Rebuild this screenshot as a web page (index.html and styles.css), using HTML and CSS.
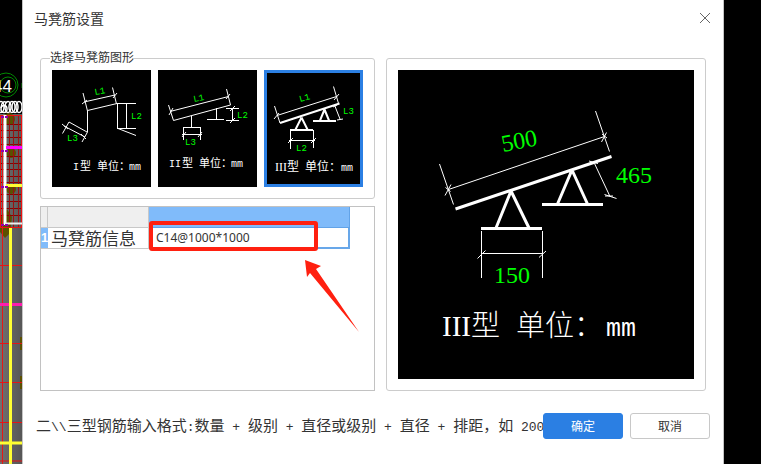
FILE: index.html
```html
<!DOCTYPE html>
<html lang="zh-CN">
<head>
<meta charset="utf-8">
<meta name="viewport" content="width=device-width, initial-scale=1">
<title>马凳筋设置</title>
<link rel="stylesheet" href="styles.css">
</head>
<body>
<div class="workspace">
  <aside class="drawing">
    <svg width="22" height="464" viewBox="0 0 22 464" aria-hidden="true">
      <defs>
        <linearGradient id="slab" x1="0" x2="1" y1="0" y2="0">
          <stop offset="0" stop-color="#707070"/><stop offset="1" stop-color="#565656"/>
        </linearGradient>
      </defs>
      <rect width="22" height="464" fill="#000"/>
      <rect y="114" width="22" height="350" fill="url(#slab)"/>
      <g fill="#5b5000">
        <circle cx="9" cy="119" r="6"/><circle cx="11" cy="153" r="5"/><circle cx="11" cy="189" r="5"/>
        <path d="M7 209l5 8-2 16-5 5-5-6v-14z"/>
        <rect x="20" y="337" width="2" height="13"/><rect x="20" y="376" width="2" height="13"/>
      </g>
      <g fill="none" stroke="#008a00">
        <circle cx="6" cy="85" r="12"/><circle cx="8" cy="85" r="8"/><path d="M22 83v5"/>
      </g>
      <path d="M0 124.500h22M0 130.500h22M0 137.500h22M0 144.500h22M0 156.500h22M0 163.500h22M0 169.500h22M0 176.500h22M0 182.500h22M0 194.500h22M0 201.500h22M0 208.500h22M0 215.500h22" stroke="#8a0000"/>
      <path d="M9.500 115v112M13.500 115v112M18.500 115v112" stroke="#9c1010"/>
      <path d="M0 115.500h22M0 227.500h22M21.500 115v112M0.500 115v112" stroke="#f01010"/>
      <path d="M5 115v110" stroke="#fff" stroke-width="3"/>
      <path d="M2.500 115v349M0 265.500h22M0 343.500h22M0 382.500h22M0 422.500h22M0 461h22" stroke="#e51515"/>
      <path d="M6 147.500h16" stroke="#f0f" stroke-width="3"/>
      <path d="M0 304.500h22" stroke="#ff1cae" stroke-width="3"/>
      <path d="M10.500 228v236M6 185.500h16M0 443h22" stroke="#ffff32" stroke-width="3"/>
      <path d="M5 223.500h17" stroke="#eee" stroke-width="2"/>
      <path d="M1 117h8M1 151h8M1 187h8M1 225h8" stroke="#9000b0" stroke-width="2" stroke-dasharray="3 1"/>
      <g class="grid-label"><text x="-7" y="92">44</text></g>
      <g fill="none" stroke="#fff" stroke-width="1.500">
        <ellipse cx="1" cy="107" rx="3" ry="5.500"/><ellipse cx="4" cy="109" rx="3" ry="3.500"/>
        <path d="M7 103c-3-3-6 0-6 5"/>
        <ellipse cx="8" cy="107" rx="3" ry="5.500"/><ellipse cx="12" cy="107" rx="3" ry="5.500"/>
        <ellipse cx="15" cy="107" rx="3" ry="5.500"/><ellipse cx="19" cy="107" rx="3" ry="5.500"/>
      </g>
    </svg>
  </aside>

  <main class="dialog">
    <header class="titlebar">
      <h1>马凳筋设置</h1>
      <button class="close" type="button" aria-label="关闭">
        <svg width="12" height="12" viewBox="0 0 12 12"><path d="M1 1l10 10M11 1L1 11" stroke="#666" fill="none"/></svg>
      </button>
    </header>

    <div class="content">
      <div class="left">
        <fieldset class="shapes">
          <legend>选择马凳筋图形</legend>
          <button class="shape" type="button">
            <svg viewBox="0 0 99 117">
              <path class="thin" d="M31 23l4.500 18v21L30 72M35.500 40.500L65 33.500M32 32l31-7M60.500 17.500l4 16.500M65 33.500h19M65.500 33v25.500M74.500 33v25.500M65 58.500h19M66 58.500l18 7M17 52l18 10M12 56l21 11M17 52l-6.500 11.500M30 34l5-4M61 28l4-5M10 54l6 5M29 64l5 5"/>
              <g class="dim"><text transform="translate(43 25) rotate(-10)">L1</text><text x="79" y="49">L2</text><text x="15" y="71">L3</text></g>
              <g class="cap"><text class="latin" x="21" y="100">I</text><text x="28" y="100">型</text><text x="45" y="100">单位：</text><text class="latin" x="77" y="100">mm</text></g>
            </svg>
          </button>
          <button class="shape" type="button">
            <svg viewBox="0 0 99 117">
              <path class="thin" d="M10.500 35l5 15.500L72.500 35l-4-16M12 41.500l58.500-15M33.500 46v11.500M25 57.500h18M25.500 57v13M42.500 57v13M24 64.500h20M58.500 38v11.500M49 49.500h17M68 38.500h13M68 50.500h13M74.500 38v12M11 45l4-7M68 29l4-5M24 67l4-5M40 67l4-5M72 41l5-5M72 53l5-5"/>
              <g class="dim"><text transform="translate(36 32) rotate(-12)">L1</text><text x="79" y="48">L2</text><text x="27" y="75">L3</text></g>
              <g class="cap"><text class="latin" x="11" y="97">II</text><text x="24" y="97">型</text><text x="41" y="97">单位：</text><text class="latin" x="73" y="97">mm</text></g>
            </svg>
          </button>
          <button class="shape selected" type="button" aria-pressed="true">
            <svg viewBox="0 0 99 117">
              <path class="thin" d="M10.500 36L16 53M13 45.500l59.500-19M69.500 16.500l5 17M26.500 60v19M49.500 60v18M25 70.500h26M70.500 35l5.500 14M10 49l5-6M70 30l5-6M24 73l5-5M47 73l5-5M69 37l4-2M73 50l6-1"/>
              <path class="mid" d="M16 53l59.500-19.500M37.500 47.500l-6 12M37.500 47.500l6 12M26 60h23M60.500 39.500L56 50.500M60.500 39.500l4.500 11M49 51h23"/>
              <g class="dim"><text transform="translate(36 32) rotate(-15)">L1</text><text x="79" y="44">L3</text><text x="32" y="81">L2</text></g>
              <g class="cap cap-lg"><text class="numeral" x="11" y="101">III</text><text x="23" y="101">型</text><text x="41" y="101">单位：</text><text class="latin" x="77" y="101">mm</text></g>
            </svg>
          </button>
        </fieldset>

        <div class="info">
          <table>
            <colgroup><col class="col-no"><col class="col-name"><col class="col-value"></colgroup>
            <thead><tr><th></th><th></th><th class="active"></th></tr></thead>
            <tbody>
              <tr>
                <th class="active" scope="row">1</th>
                <td class="name"><label for="spec">马凳筋信息</label></td>
                <td class="value"><input id="spec" type="text" value="C14@1000*1000"></td>
              </tr>
            </tbody>
          </table>
          <div class="highlight"></div>
          <svg class="arrow" width="56" height="74" viewBox="0 0 56 74" aria-hidden="true">
            <path d="M1 1l16 6-5 3L55 73 6 14l-3 4z" fill="#ff2010"/>
          </svg>
        </div>
      </div>

      <section class="preview">
        <svg viewBox="0 0 296 309" role="img" aria-label="III型">
          <path class="thin" d="M41.500 94l14 40.500M50.500 119.500l156-53M197.500 41l14 40.500M47 125.500l6-11M47.500 117.500l5 4M203.500 72l5-9.500M204 64l5 4M191 91l9 2.500M196.500 93.500l15.500 33M206.500 124.500l12 4M207 126l8 0M83.500 161v47M144.500 161v47M83 183.500h62M79.500 188.500l8-8M141 187.500l7-6.500"/>
          <path class="thick" d="M57.500 139l156-52.500M113 121l-15 37M113 121l18 37M83 158.500h61M174 100l-14.500 34M174 100l15.500 34M144 134.500h61"/>
          <g class="measure"><text transform="translate(105 82) rotate(-11)">500</text><text x="218" y="113">465</text><text x="96" y="213">150</text></g>
          <g class="big-cap"><text class="numeral" x="44" y="266">III</text><text x="73" y="266">型</text><text x="118" y="266">单位：</text><text class="latin" x="208" y="266">mm</text></g>
        </svg>
      </section>
    </div>

    <footer class="actions">
      <p class="hint">二<span>\\</span>三型钢筋输入格式<span>:</span>数量<span> + </span>级别<span> + </span>直径或级别<span> + </span>直径<span> + </span>排距，如<span> 200</span></p>
      <button class="btn primary" type="button">确定</button>
      <button class="btn" type="button">取消</button>
    </footer>
  </main>
</div>
</body>
</html>
```
FILE: styles.css
```css
* { box-sizing: border-box; }

body {
  margin: 0;
  background: #000;
  color: #333;
  font: 12px/18px "Noto Sans", "Noto Sans CJK SC", sans-serif;
}

button, input { font: inherit; color: inherit; }

.workspace {
  display: flex;
  min-height: 100vh;
  padding-right: 37px;
}

.drawing { flex: none; width: 22px; overflow: hidden; }
.drawing svg { display: block; }
.grid-label { fill: #fff; font: 17px "Liberation Sans", sans-serif; }

.dialog {
  flex: 1;
  min-width: 0;
  background: #fff;
  border: solid #c4c4c4;
  border-width: 0 1px;
}

.titlebar {
  display: flex;
  align-items: center;
  justify-content: space-between;
  height: 36px;
  padding: 0 12px 0 11px;
}
.titlebar h1 {
  margin: 0;
  font: 14px/20px "Noto Sans CJK SC", sans-serif;
}
.close {
  display: flex;
  padding: 0;
  border: 0;
  background: none;
}

.content {
  display: grid;
  grid-template-columns: 335fr 320fr;
  gap: 11px;
  padding: 22px 17px 0;
}

.left {
  display: flex;
  flex-direction: column;
  gap: 7px;
  min-width: 0;
}

.shapes {
  position: relative;
  display: grid;
  grid-template-columns: repeat(3, 1fr);
  gap: 7px;
  min-width: 0;
  margin: 0;
  padding: 11px;
  border: 1px solid #ccc;
  border-radius: 3px;
}
.shapes legend {
  position: absolute;
  top: -11px;
  left: 9px;
  padding: 0;
  background: #fff;
  font-family: "Noto Sans CJK SC", sans-serif;
}
.shape {
  position: relative;
  padding: 0;
  border: 0;
  background: #000;
}
.shape svg { display: block; width: 100%; }
.selected::after {
  content: "";
  position: absolute;
  inset: 0;
  border: 3px solid #2b7fe3;
}

.thin { fill: none; stroke: #fff; stroke-width: 1; }
.mid { fill: none; stroke: #fff; stroke-width: 2; }
.thick { fill: none; stroke: #fff; stroke-width: 3; }
.dim { fill: #0f0; font: 9px "Liberation Mono", monospace; }
.cap { fill: #fff; font: 11px "Noto Sans CJK SC", sans-serif; }
.cap .latin { font: 10px "Liberation Mono", monospace; }
.cap-lg { font-size: 12px; }
.cap .numeral { font: 12px "Liberation Serif", serif; }
.measure { fill: #0f0; font: 24px "Liberation Serif", serif; }
.big-cap { fill: #fff; font: 300 29px "Noto Sans CJK SC", sans-serif; }
.big-cap .numeral { font: 29px "Liberation Serif", serif; }
.big-cap .latin { font: 25px "Liberation Mono", monospace; }

.info {
  position: relative;
  flex: 1;
  border: 1px solid #c2c2c2;
}
.info table {
  width: 309px;
  table-layout: fixed;
  border-collapse: separate;
  border-spacing: 0;
}
.col-no { width: 7px; }
.col-name { width: 101px; }
.info th, .info td {
  height: 21px;
  padding: 0;
  border: solid #c8c8c8;
  border-width: 0 1px 1px 0;
  line-height: 20px;
}
.info thead th { background: #efefef; }
.info thead .active {
  border-color: #62a3e8;
  background: #80bbfa;
}
.info tbody .active {
  border-right-width: 0;
  background: #80bbfa;
  color: #fff;
  font: bold 13px/20px "Liberation Sans", sans-serif;
}
.info .name {
  padding-left: 3px;
  font: 17px/20px "Noto Sans CJK SC", sans-serif;
  white-space: nowrap;
}
.info .value {
  border: solid #68a7e9;
  border-width: 0 2px 2px 0;
}
.value input {
  display: block;
  width: 100%;
  height: 19px;
  padding: 0 7px;
  border: 0;
  outline: 0;
  background: none;
}
.highlight {
  position: absolute;
  top: 14px;
  left: 108px;
  width: 169px;
  height: 30px;
  border: 4px solid #ff2010;
  border-radius: 3px;
}
.arrow {
  position: absolute;
  top: 52px;
  left: 263px;
}

.preview {
  padding: 11px;
  border: 1px solid #ccc;
  border-radius: 3px;
}
.preview svg {
  display: block;
  width: 100%;
  background: #000;
}

.actions {
  display: flex;
  align-items: center;
  padding: 22px 13px;
}
.hint {
  flex: 1;
  min-width: 0;
  margin: 0;
  overflow: hidden;
  font: 15px/22px "Noto Sans CJK SC", sans-serif;
  white-space: nowrap;
}
.hint span { font: 13px/22px "Liberation Mono", monospace; }
.btn {
  width: 80px;
  height: 26px;
  padding: 0;
  border: 1px solid #c8c8c8;
  border-radius: 3px;
  background: #fff;
  font-family: "Noto Sans CJK SC", sans-serif;
}
.btn + .btn { margin-left: 7px; }
.primary {
  border-color: #2b7fe3;
  background: #2b7fe3;
  color: #fff;
}
```
